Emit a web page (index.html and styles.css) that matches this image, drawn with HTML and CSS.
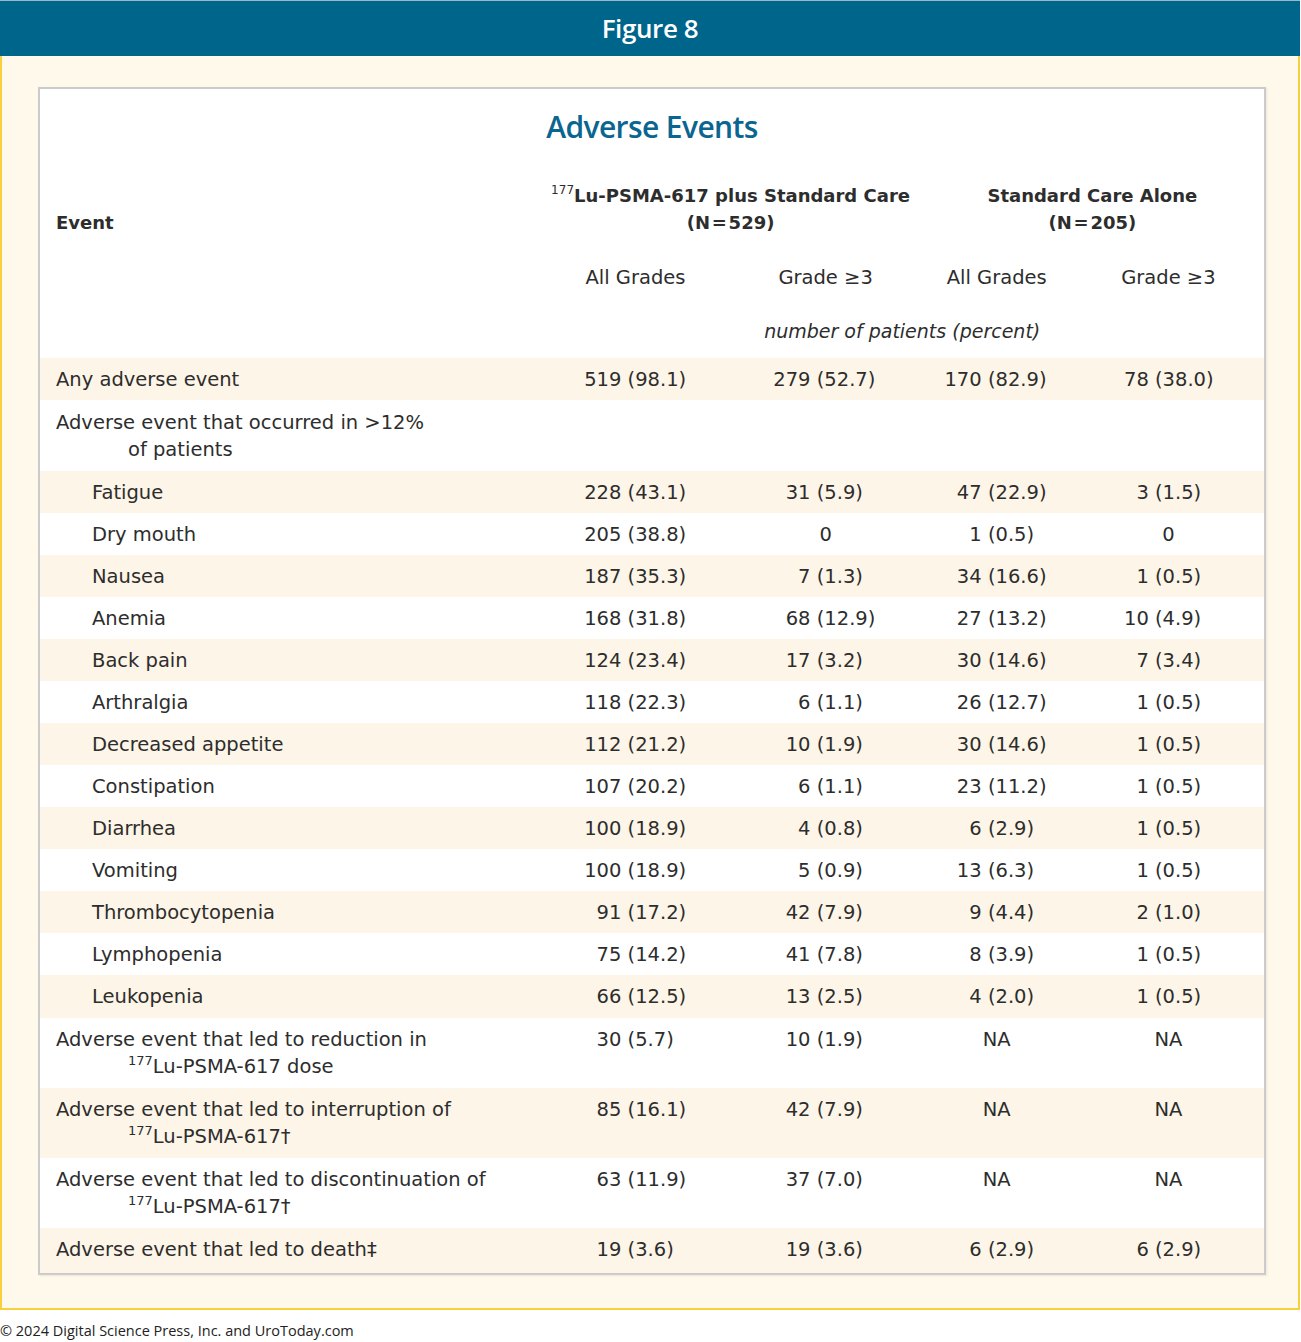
FILE: index.html
```html
<!DOCTYPE html>
<html lang="en">
<head>
<meta charset="utf-8">
<title>Figure 8 - Adverse Events</title>
<link rel="stylesheet" href="styles.css">
</head>
<body>
<header class="bar">Figure 8</header>
<div class="frame">
  <section class="panel">
    <h1 class="title">Adverse Events</h1>
    <table class="ae">
      <colgroup>
        <col class="w-label"><col class="w-c1"><col class="w-c2"><col class="w-c3"><col class="w-c4">
      </colgroup>
      <thead>
        <tr class="h-group">
          <th class="lbl ev">Event</th>
          <th colspan="2" class="grp"><sup>177</sup>Lu-PSMA-617 plus Standard Care<br>(N&#8202;=&#8202;529)</th>
          <th colspan="2" class="grp g2">Standard Care Alone<br>(N&#8202;=&#8202;205)</th>
        </tr>
        <tr class="h-sub">
          <th></th>
          <th class="sub">All Grades</th>
          <th class="sub">Grade ≥3</th>
          <th class="sub">All Grades</th>
          <th class="sub">Grade ≥3</th>
        </tr>
        <tr class="h-unit">
          <th></th>
          <th colspan="4" class="unit">number of patients (percent)</th>
        </tr>
      </thead>
      <tbody>
        <tr class="sh"><td class="lbl">Any adverse event</td><td class="c1"><span class="a">519</span> (98.1)</td><td class="c2"><span class="a">279</span> (52.7)</td><td class="c3"><span class="a">170</span> (82.9)</td><td class="c4"><span class="a">78</span> (38.0)</td></tr>
        <tr class="two first2"><td class="lbl hang">Adverse event that occurred in &gt;12%<br>of patients</td><td></td><td></td><td></td><td></td></tr>
        <tr class="sh"><td class="lbl ind">Fatigue</td><td class="c1"><span class="a">228</span> (43.1)</td><td class="c2"><span class="a">31</span> (5.9)</td><td class="c3"><span class="a">47</span> (22.9)</td><td class="c4"><span class="a">3</span> (1.5)</td></tr>
        <tr><td class="lbl ind">Dry mouth</td><td class="c1"><span class="a">205</span> (38.8)</td><td class="ctr">0</td><td class="c3"><span class="a">1</span> (0.5)</td><td class="ctr">0</td></tr>
        <tr class="sh"><td class="lbl ind">Nausea</td><td class="c1"><span class="a">187</span> (35.3)</td><td class="c2"><span class="a">7</span> (1.3)</td><td class="c3"><span class="a">34</span> (16.6)</td><td class="c4"><span class="a">1</span> (0.5)</td></tr>
        <tr><td class="lbl ind">Anemia</td><td class="c1"><span class="a">168</span> (31.8)</td><td class="c2"><span class="a">68</span> (12.9)</td><td class="c3"><span class="a">27</span> (13.2)</td><td class="c4"><span class="a">10</span> (4.9)</td></tr>
        <tr class="sh"><td class="lbl ind">Back pain</td><td class="c1"><span class="a">124</span> (23.4)</td><td class="c2"><span class="a">17</span> (3.2)</td><td class="c3"><span class="a">30</span> (14.6)</td><td class="c4"><span class="a">7</span> (3.4)</td></tr>
        <tr><td class="lbl ind">Arthralgia</td><td class="c1"><span class="a">118</span> (22.3)</td><td class="c2"><span class="a">6</span> (1.1)</td><td class="c3"><span class="a">26</span> (12.7)</td><td class="c4"><span class="a">1</span> (0.5)</td></tr>
        <tr class="sh"><td class="lbl ind">Decreased appetite</td><td class="c1"><span class="a">112</span> (21.2)</td><td class="c2"><span class="a">10</span> (1.9)</td><td class="c3"><span class="a">30</span> (14.6)</td><td class="c4"><span class="a">1</span> (0.5)</td></tr>
        <tr><td class="lbl ind">Constipation</td><td class="c1"><span class="a">107</span> (20.2)</td><td class="c2"><span class="a">6</span> (1.1)</td><td class="c3"><span class="a">23</span> (11.2)</td><td class="c4"><span class="a">1</span> (0.5)</td></tr>
        <tr class="sh"><td class="lbl ind">Diarrhea</td><td class="c1"><span class="a">100</span> (18.9)</td><td class="c2"><span class="a">4</span> (0.8)</td><td class="c3"><span class="a">6</span> (2.9)</td><td class="c4"><span class="a">1</span> (0.5)</td></tr>
        <tr><td class="lbl ind">Vomiting</td><td class="c1"><span class="a">100</span> (18.9)</td><td class="c2"><span class="a">5</span> (0.9)</td><td class="c3"><span class="a">13</span> (6.3)</td><td class="c4"><span class="a">1</span> (0.5)</td></tr>
        <tr class="sh"><td class="lbl ind">Thrombocytopenia</td><td class="c1"><span class="a">91</span> (17.2)</td><td class="c2"><span class="a">42</span> (7.9)</td><td class="c3"><span class="a">9</span> (4.4)</td><td class="c4"><span class="a">2</span> (1.0)</td></tr>
        <tr><td class="lbl ind">Lymphopenia</td><td class="c1"><span class="a">75</span> (14.2)</td><td class="c2"><span class="a">41</span> (7.8)</td><td class="c3"><span class="a">8</span> (3.9)</td><td class="c4"><span class="a">1</span> (0.5)</td></tr>
        <tr class="sh leuk"><td class="lbl ind">Leukopenia</td><td class="c1"><span class="a">66</span> (12.5)</td><td class="c2"><span class="a">13</span> (2.5)</td><td class="c3"><span class="a">4</span> (2.0)</td><td class="c4"><span class="a">1</span> (0.5)</td></tr>
        <tr class="two"><td class="lbl hang">Adverse event that led to reduction in<br><sup>177</sup>Lu-PSMA-617 dose</td><td class="c1"><span class="a">30</span> (5.7)</td><td class="c2"><span class="a">10</span> (1.9)</td><td class="ctr">NA</td><td class="ctr">NA</td></tr>
        <tr class="sh two"><td class="lbl hang">Adverse event that led to interruption of<br><sup>177</sup>Lu-PSMA-617†</td><td class="c1"><span class="a">85</span> (16.1)</td><td class="c2"><span class="a">42</span> (7.9)</td><td class="ctr">NA</td><td class="ctr">NA</td></tr>
        <tr class="two"><td class="lbl hang">Adverse event that led to discontinuation of<br><sup>177</sup>Lu-PSMA-617†</td><td class="c1"><span class="a">63</span> (11.9)</td><td class="c2"><span class="a">37</span> (7.0)</td><td class="ctr">NA</td><td class="ctr">NA</td></tr>
        <tr class="sh last"><td class="lbl">Adverse event that led to death‡</td><td class="c1"><span class="a">19</span> (3.6)</td><td class="c2"><span class="a">19</span> (3.6)</td><td class="c3"><span class="a">6</span> (2.9)</td><td class="c4"><span class="a">6</span> (2.9)</td></tr>
      </tbody>
    </table>
  </section>
</div>
<footer class="copy">© 2024 Digital Science Press, Inc. and UroToday.com</footer>
</body>
</html>
```
FILE: styles.css
```css
html, body {
  margin: 0;
  padding: 0;
  background: #ffffff;
}
body {
  width: 1301px;
  font-family: "Open Sans", "DejaVu Sans", sans-serif;
}
.bar {
  box-sizing: border-box;
  width: 1300px;
  height: 56px;
  background: #00658b;
  border-top: 1px solid #9ab7c4;
  color: #ffffff;
  font-family: "Open Sans", sans-serif;
  font-weight: 600;
  font-size: 26px;
  letter-spacing: -0.4px;
  line-height: 54px;
  text-align: center;
}
.frame {
  box-sizing: border-box;
  width: 1300px;
  background: #fef9ea;
  border-left: 2px solid #f8cf3c;
  border-right: 2px solid #f8cf3c;
  border-bottom: 2px solid #f8cf3c;
  padding: 31px 32px 33px 36px;
}
.panel {
  background: #ffffff;
  border: 2px solid #cbcbcb;
  box-shadow: 1px 1px 2px rgba(0,0,0,0.08);
}
.title {
  margin: 0;
  padding-top: 20px;
  font-family: "Open Sans", sans-serif;
  font-weight: 600;
  font-size: 30px;
  letter-spacing: -0.6px;
  line-height: 36px;
  color: #0a6690;
  text-align: center;
}
.ae {
  width: 100%;
  border-collapse: collapse;
  table-layout: fixed;
  font-family: "DejaVu Sans", sans-serif;
  font-size: 19.5px;
  color: #2d2d2d;
}
.w-label { width: 500px; }
.w-c1 { width: 190px; }
.w-c2 { width: 190px; }
.w-c3 { width: 152px; }
.w-c4 { width: 191px; }
.ae th, .ae td {
  padding: 0;
  line-height: 27px;
  vertical-align: top;
  font-weight: normal;
}
.ae sup {
  font-size: 13px;
  line-height: 0;
  vertical-align: 8px;
}
.h-group th {
  padding-top: 37px;
  vertical-align: bottom;
  font-weight: bold;
  font-size: 18px;
  text-align: center;
}
.h-group .ev {
  text-align: left;
}
.h-group sup {
  font-size: 12px;
  font-weight: normal;
}
.h-sub th {
  padding-top: 28px;
  text-align: center;
}
.h-unit th {
  padding-top: 27px;
  padding-bottom: 13px;
}
.unit {
  font-style: italic;
  text-align: center;
  font-size: 19px;
}
.ae tbody td {
  padding-top: 8px;
  padding-bottom: 7px;
  white-space: nowrap;
}
.ae tbody tr.two td {
  padding-bottom: 8px;
}
.ae tbody tr.first2 td {
  padding-top: 9px;
  padding-bottom: 8px;
}
.ae tbody tr.leuk td {
  padding-bottom: 8px;
}
.ae tbody tr.last td {
  padding-bottom: 10px;
}
.ae tbody tr.sh td {
  background: #fdf5e7;
}
.lbl {
  padding-left: 16px !important;
  text-align: left;
}
.lbl.ind {
  padding-left: 52px !important;
}
.lbl.hang {
  padding-left: 88px !important;
  text-indent: -72px;
}
.ctr {
  text-align: center;
}
.a {
  display: inline-block;
  text-align: right;
}
.c1 .a { width: 81px; }
.c2 .a { width: 80px; }
.c3 .a { width: 61px; }
.c4 .a { width: 76px; }
.copy {
  padding-top: 11px;
  font-family: "Open Sans", sans-serif;
  font-size: 14.5px;
  line-height: 20px;
  color: #222222;
}
```
